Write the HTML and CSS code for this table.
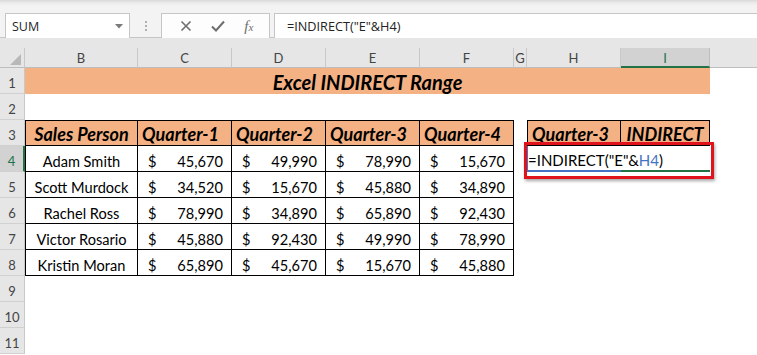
FILE: index.html
```html
<!DOCTYPE html>
<html>
<head>
<meta charset="utf-8">
<link rel="stylesheet" href="styles.css">
</head>
<body>
<div class="toolbar">
  <div class="namebox"><span>SUM</span><svg class="dd" width="8" height="5" viewBox="0 0 8 5"><path d="M0 0H8L4 4.5Z" fill="#7a7a7a"/></svg></div>
  <div class="grip"><i></i><i></i><i></i></div>
  <div class="btns">
    <svg width="12" height="12" viewBox="0 0 12 12"><path d="M1.5 1.5L10.5 10.5M10.5 1.5L1.5 10.5" stroke="#6e6e6e" stroke-width="1.6" fill="none"/></svg>
    <svg width="14" height="12" viewBox="0 0 14 12"><path d="M1 6.5L5 10.5L13 1.5" stroke="#6e6e6e" stroke-width="2" fill="none"/></svg>
    <span class="fx">f<sub>x</sub></span>
  </div>
  <div class="formula">=INDIRECT("E"&amp;H4)</div>
</div>
<div class="band"></div>
<div class="sheet">
  <div class="corner"><svg width="25" height="20" viewBox="0 0 25 20"><path d="M10 17H21V6Z" fill="#b8b8b8"/></svg></div>
  <div class="ch">B</div><div class="ch">C</div><div class="ch">D</div><div class="ch">E</div><div class="ch">F</div><div class="ch">G</div><div class="ch">H</div><div class="ch sel">I</div><div class="ch rest"></div>

  <div class="rh">1</div><div class="title">Excel INDIRECT Range</div><div></div>

  <div class="rh">2</div><div class="span9"></div>

  <div class="rh">3</div>
  <div class="tc th first top center">Sales Person</div>
  <div class="tc th top">Quarter-1</div>
  <div class="tc th top">Quarter-2</div>
  <div class="tc th top">Quarter-3</div>
  <div class="tc th top">Quarter-4</div>
  <div></div>
  <div class="tc th first top">Quarter-3</div>
  <div class="tc th top center">INDIRECT</div>
  <div></div>

  <div class="rh rsel">4</div>
  <div class="tc first name">Adam Smith</div>
  <div class="tc money"><span>$</span><span>45,670</span></div>
  <div class="tc money"><span>$</span><span>49,990</span></div>
  <div class="tc money"><span>$</span><span>78,990</span></div>
  <div class="tc money"><span>$</span><span>15,670</span></div>
  <div></div>
  <div class="edit">=INDIRECT("E"&amp;<span class="ref">H4</span>)</div>
  <div class="active"></div>
  <div></div>

  <div class="rh">5</div>
  <div class="tc first name">Scott Murdock</div>
  <div class="tc money"><span>$</span><span>34,520</span></div>
  <div class="tc money"><span>$</span><span>15,670</span></div>
  <div class="tc money"><span>$</span><span>45,880</span></div>
  <div class="tc money"><span>$</span><span>34,890</span></div>
  <div class="span4"></div>

  <div class="rh">6</div>
  <div class="tc first name">Rachel Ross</div>
  <div class="tc money"><span>$</span><span>78,990</span></div>
  <div class="tc money"><span>$</span><span>34,890</span></div>
  <div class="tc money"><span>$</span><span>65,890</span></div>
  <div class="tc money"><span>$</span><span>92,430</span></div>
  <div class="span4"></div>

  <div class="rh">7</div>
  <div class="tc first name">Victor Rosario</div>
  <div class="tc money"><span>$</span><span>45,880</span></div>
  <div class="tc money"><span>$</span><span>92,430</span></div>
  <div class="tc money"><span>$</span><span>49,990</span></div>
  <div class="tc money"><span>$</span><span>78,990</span></div>
  <div class="span4"></div>

  <div class="rh">8</div>
  <div class="tc first name">Kristin Moran</div>
  <div class="tc money"><span>$</span><span>65,890</span></div>
  <div class="tc money"><span>$</span><span>45,670</span></div>
  <div class="tc money"><span>$</span><span>15,670</span></div>
  <div class="tc money"><span>$</span><span>45,880</span></div>
  <div class="span4"></div>

  <div class="rh">9</div><div class="span9"></div>
  <div class="rh">10</div><div class="span9"></div>
  <div class="rh">11</div><div class="span9"></div>

  <div class="redbox"></div>
</div>
</body>
</html>
```

FILE: styles.css
```css
* { box-sizing: border-box; }
html, body { margin: 0; padding: 0; background: #fff; }
body { width: 757px; height: 355px; overflow: hidden; font-family: Lato, "Liberation Sans", sans-serif; }

.toolbar {
  height: 38px;
  display: flex;
  align-items: flex-start;
  padding-top: 13px;
  background: linear-gradient(#d9d9d9 0, #ececec 3px, #f3f3f3 6px);
  border-bottom: 1px solid #c6c6c6;
}
.namebox {
  margin-left: 5px;
  width: 125px;
  height: 25px;
  background: #fff;
  border: 1px solid #c6c6c6;
  border-bottom: none;
  display: flex;
  align-items: center;
  justify-content: space-between;
  padding: 0 6px 0 6px;
  font-family: "Open Sans", sans-serif;
  font-size: 12.5px;
  color: #262626;
}
.dd { margin-top: 1px; }
.grip {
  width: 31px;
  height: 25px;
  display: flex;
  flex-direction: column;
  align-items: center;
  justify-content: center;
  gap: 2px;
}
.grip i { width: 2px; height: 2px; background: #b0b0b0; display: block; }
.btns {
  width: 109px;
  height: 25px;
  background: #fdfdfd;
  border: 1px solid #c6c6c6;
  border-bottom: none;
  display: flex;
  align-items: center;
  justify-content: space-around;
  padding: 0 6px 0 8px;
}
.fx {
  font-family: "Liberation Serif", serif;
  font-style: italic;
  font-size: 15px;
  color: #6e6e6e;
  line-height: 1;
}
.fx sub { font-size: 11px; vertical-align: 0; }
.formula {
  margin-left: 4px;
  flex: 1;
  height: 25px;
  background: #fff;
  border: 1px solid #c6c6c6;
  border-right: none;
  border-bottom: none;
  padding-left: 12px;
  font-family: "Open Sans", sans-serif;
  font-size: 12.7px;
  line-height: 24px;
  color: #222;
}
.band { height: 10px; background: #e6e6e6; }

.sheet {
  position: relative;
  display: grid;
  grid-template-columns: 25px 113px 94px 94px 94px 94px 13px 94px 89px 1fr;
  grid-template-rows: 20px repeat(11, 26px);
}
.corner { background: #e6e6e6; border-right: 1px solid #c8c8c8; border-bottom: 1px solid #bdbdbd; }
.corner svg { display: block; }
.ch {
  background: #e6e6e6;
  border-right: 1px solid #c8c8c8;
  border-bottom: 1px solid #bdbdbd;
  display: flex;
  align-items: center;
  justify-content: center;
  font-size: 13px;
  color: #444;
  padding-top: 1px;
}
.ch.sel { background: #d2d2d2; color: #217346; border-bottom: 2px solid #217346; border-right-color: #bdbdbd; }
.ch.rest { border-right: none; }
.rh {
  background: #e6e6e6;
  border-right: 1px solid #c8c8c8;
  border-bottom: 1px solid #d0d0d0;
  display: flex;
  align-items: center;
  justify-content: center;
  font-size: 13px;
  color: #444;
  padding-top: 4px;
}
.rh.rsel { background: #d2d2d2; color: #217346; border-right: 2px solid #217346; }

.title {
  grid-column: span 8;
  background: #f4b183;
  display: flex;
  align-items: center;
  justify-content: center;
  font-weight: bold;
  font-style: italic;
  font-size: 20px;
  color: #000;
  padding-top: 1px;
}
.span9 { grid-column: span 9; }
.span4 { grid-column: span 4; }

.tc {
  border-right: 1px solid #000;
  border-bottom: 1px solid #000;
  display: flex;
  align-items: center;
  font-size: 14.6px;
  color: #000;
  padding-top: 5px;
  white-space: nowrap;
}
.tc.first { border-left: 1px solid #000; }
.tc.top { border-top: 1px solid #000; }
.th {
  background: #f4b183;
  font-weight: bold;
  font-style: italic;
  font-size: 18px;
  padding-left: 4px;
  padding-top: 2px;
}
.th.center { justify-content: center; padding-left: 0; }
.name { justify-content: center; }
.money { justify-content: space-between; padding-left: 10px; padding-right: 8px; }

.edit {
  position: relative;
  z-index: 1;
  display: flex;
  align-items: center;
  white-space: nowrap;
  overflow: visible;
  font-size: 15px;
  color: #000;
  padding-top: 3px;
  border-left: 1px solid #4472c4;
  border-bottom: 2px solid #4472c4;
}
.ref { color: #4472c4; }
.active { border-bottom: 2px solid #217346; }

.redbox {
  position: absolute;
  left: 524px;
  top: 94px;
  width: 190px;
  height: 37px;
  border: 3px solid #e0121c;
  box-shadow: 1px 2px 3px rgba(0,0,0,0.35);
  z-index: 2;
}
```
